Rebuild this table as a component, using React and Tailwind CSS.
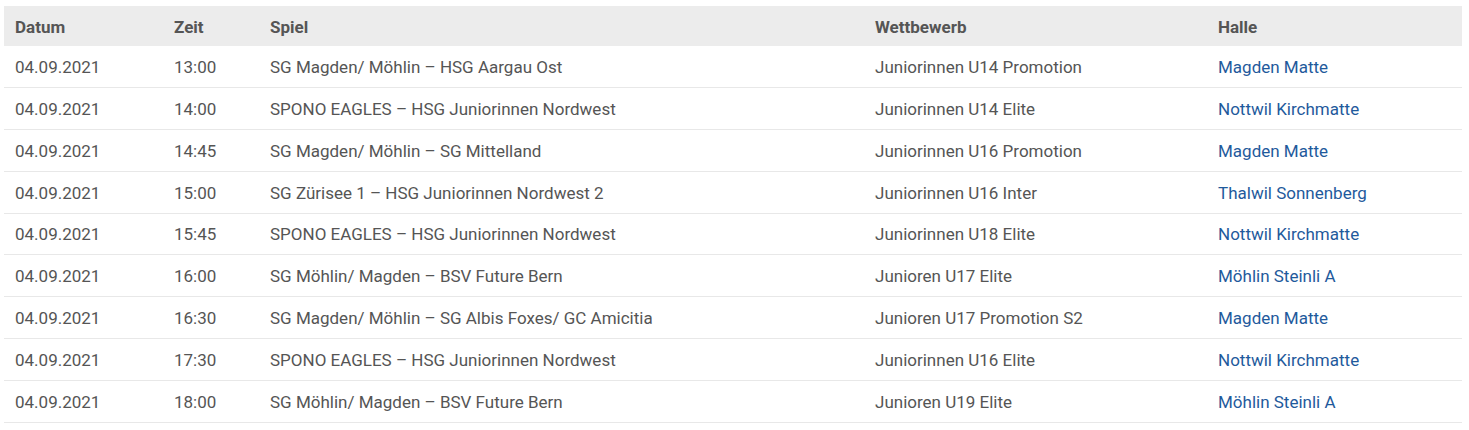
const games = [
    ['04.09.2021', '13:00', 'SG Magden/ Möhlin – HSG Aargau Ost', 'Juniorinnen U14 Promotion', 'Magden Matte'],
    ['04.09.2021', '14:00', 'SPONO EAGLES – HSG Juniorinnen Nordwest', 'Juniorinnen U14 Elite', 'Nottwil Kirchmatte'],
    ['04.09.2021', '14:45', 'SG Magden/ Möhlin – SG Mittelland', 'Juniorinnen U16 Promotion', 'Magden Matte'],
    ['04.09.2021', '15:00', 'SG Zürisee 1 – HSG Juniorinnen Nordwest 2', 'Juniorinnen U16 Inter', 'Thalwil Sonnenberg'],
    ['04.09.2021', '15:45', 'SPONO EAGLES – HSG Juniorinnen Nordwest', 'Juniorinnen U18 Elite', 'Nottwil Kirchmatte'],
    ['04.09.2021', '16:00', 'SG Möhlin/ Magden – BSV Future Bern', 'Junioren U17 Elite', 'Möhlin Steinli A'],
    ['04.09.2021', '16:30', 'SG Magden/ Möhlin – SG Albis Foxes/ GC Amicitia', 'Junioren U17 Promotion S2', 'Magden Matte'],
    ['04.09.2021', '17:30', 'SPONO EAGLES – HSG Juniorinnen Nordwest', 'Juniorinnen U16 Elite', 'Nottwil Kirchmatte'],
    ['04.09.2021', '18:00', 'SG Möhlin/ Magden – BSV Future Bern', 'Junioren U19 Elite', 'Möhlin Steinli A'],
];

export default function App() {
    return (
        <div className="bg-white px-[4px] pt-[6px] font-['Roboto',sans-serif] text-[17px] text-[#555]">
            <table className="w-[1458px] table-fixed border-collapse text-left">
                <colgroup>
                    <col className="w-[159px]" />
                    <col className="w-[96px]" />
                    <col className="w-[605px]" />
                    <col className="w-[343px]" />
                    <col className="w-[255px]" />
                </colgroup>
                <thead>
                    <tr className="h-[40px] bg-[#ececec]">
                        <th className="px-[11px] pt-[3px] font-bold">Datum</th>
                        <th className="px-[11px] pt-[3px] font-bold">Zeit</th>
                        <th className="px-[11px] pt-[3px] font-bold">Spiel</th>
                        <th className="px-[11px] pt-[3px] font-bold">Wettbewerb</th>
                        <th className="px-[11px] pt-[3px] font-bold">Halle</th>
                    </tr>
                </thead>
                <tbody>
                    {games.map((game, i) => (
                        <tr key={i} className="h-[41.8px] border-b border-[#e8e8e8]">
                            <td className="px-[11px] pt-[2px]">{game[0]}</td>
                            <td className="px-[11px] pt-[2px]">{game[1]}</td>
                            <td className="px-[11px] pt-[2px]">{game[2]}</td>
                            <td className="px-[11px] pt-[2px]">{game[3]}</td>
                            <td className="px-[11px] pt-[2px]">
                                <a href="#" className="text-[#1f5a9c]">
                                    {game[4]}
                                </a>
                            </td>
                        </tr>
                    ))}
                </tbody>
            </table>
        </div>
    );
}
